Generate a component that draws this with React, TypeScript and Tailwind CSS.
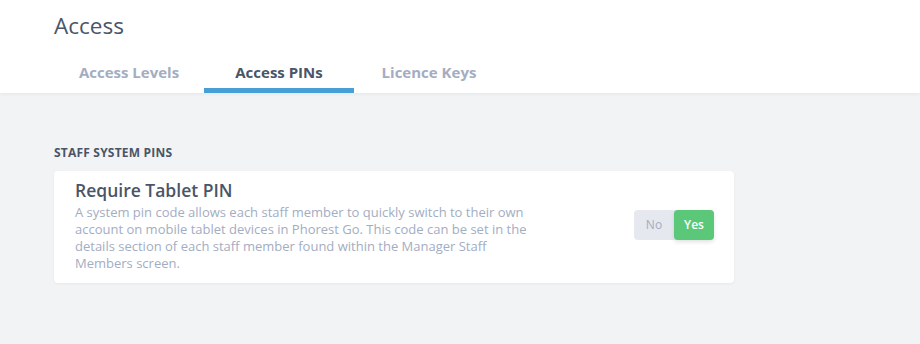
import { useState } from 'react';

const tabs = ['Access Levels', 'Access PINs', 'Licence Keys'];

export default function App() {
  const [active, setActive] = useState('Access PINs');
  const [pin, setPin] = useState(true);

  return (
    <div className="min-h-[344px] bg-[#f2f3f5] font-['Open_Sans',sans-serif]">
      <header className="bg-white shadow-[0_1px_4px_rgba(0,0,0,0.06)] px-[54px]">
        <h1 className="pt-[12px] text-[22.5px] font-medium leading-[27px] text-[#4a5568]">Access</h1>
        <nav className="mt-[17px] flex">
          {tabs.map((tab) => (
            <button
              key={tab}
              onClick={() => setActive(tab)}
              className={
                'w-[150px] h-[37px] border-b-[5px] text-[15px] font-bold ' +
                (tab === active
                  ? 'border-[#479fd6] text-[#4a5568]'
                  : 'border-transparent text-[#a3adc2]')
              }
            >
              {tab}
            </button>
          ))}
        </nav>
      </header>

      <main className="px-[54px] pt-[52px]">
        <h2 className="text-[12px] font-bold uppercase tracking-[0.2px] text-[#4a5568] leading-[16px]">
          Staff System PINs
        </h2>
        <section className="mt-[10px] w-[680px] bg-white rounded-[4px] shadow-[0_1px_3px_rgba(0,0,0,0.05)] pl-[21px] pr-[20px] pt-[7px] pb-[11px] flex items-center">
          <div className="flex-1">
            <h3 className="text-[17.5px] font-semibold leading-[24px] text-[#4a5568]">Require Tablet PIN</h3>
            <p className="mt-[2px] text-[13px] leading-[17px] text-[#a3adc2] whitespace-nowrap">
              A system pin code allows each staff member to quickly switch to their own
              <br />
              account on mobile tablet devices in Phorest Go. This code can be set in the
              <br />
              details section of each staff member found within the Manager Staff
              <br />
              Members screen.
            </p>
          </div>
          <div className="flex h-[30px] rounded-[4px] bg-[#e5e8ee] text-[12px]">
            <button
              onClick={() => setPin(false)}
              className={
                'w-[40px] rounded-[4px] ' +
                (!pin ? 'bg-[#5ac878] text-white font-semibold shadow-[0_2px_4px_rgba(0,0,0,0.12)]' : 'text-[#a3adc2]')
              }
            >
              No
            </button>
            <button
              onClick={() => setPin(true)}
              className={
                'w-[40px] rounded-[4px] ' +
                (pin ? 'bg-[#5ac878] text-white font-semibold shadow-[0_2px_4px_rgba(0,0,0,0.12)]' : 'text-[#a3adc2]')
              }
            >
              Yes
            </button>
          </div>
        </section>
      </main>
    </div>
  );
}
